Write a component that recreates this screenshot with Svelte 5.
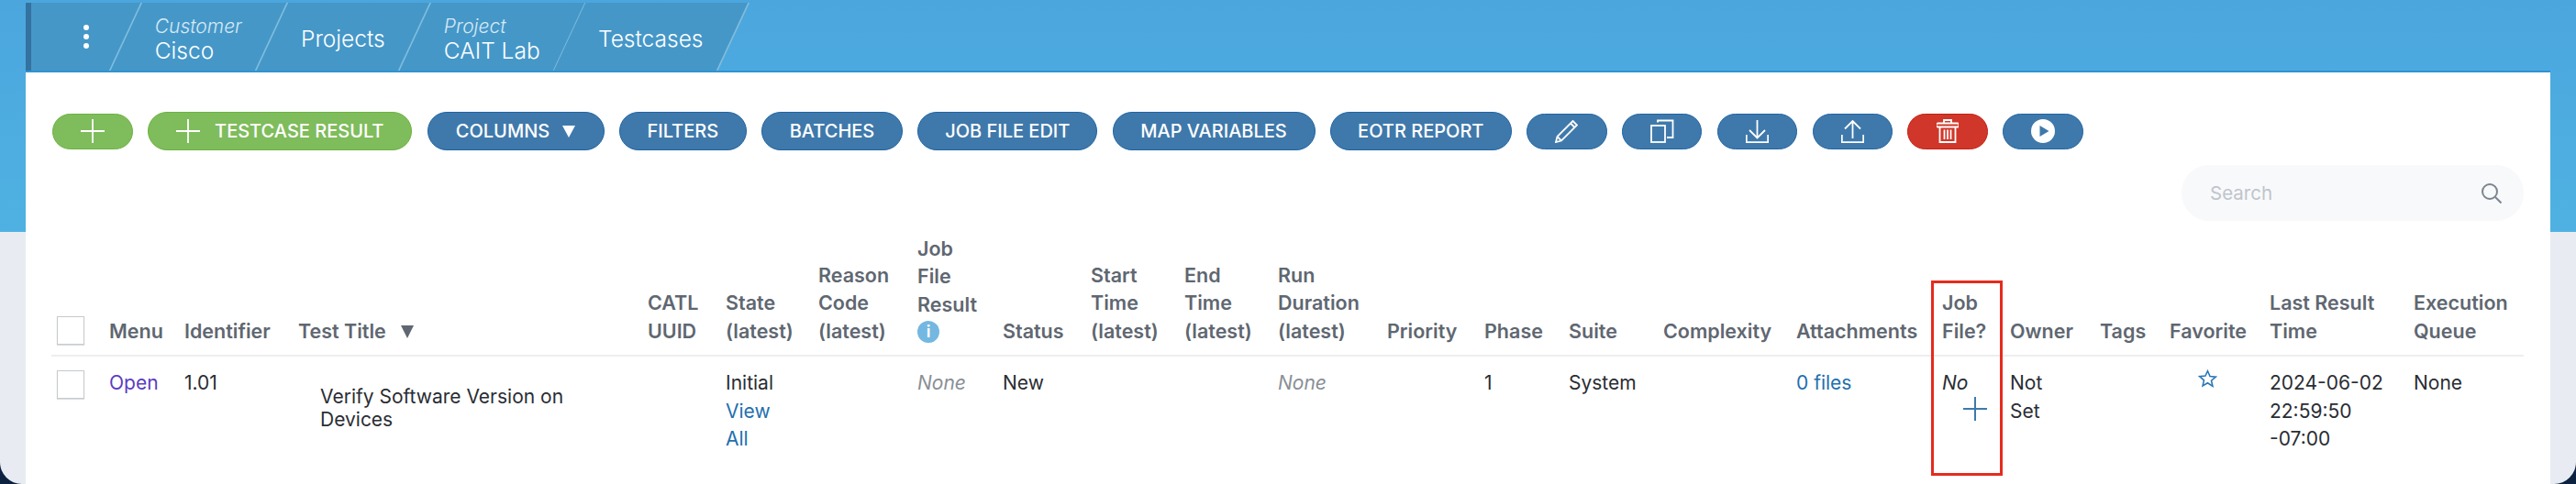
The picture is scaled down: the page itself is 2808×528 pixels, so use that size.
<script>
    const columns = [
        { w: 63, lines: [] },
        { w: 82, lines: ['Menu'] },
        { w: 124, lines: ['Identifier'] },
        { w: 381, lines: ['Test Title'], sort: true },
        { w: 85, lines: ['CATL', 'UUID'] },
        { w: 101, lines: ['State', '(latest)'] },
        { w: 108, lines: ['Reason', 'Code', '(latest)'] },
        { w: 93, lines: ['Job', 'File', 'Result'], info: true },
        { w: 96, lines: ['Status'] },
        { w: 102, lines: ['Start', 'Time', '(latest)'] },
        { w: 102, lines: ['End', 'Time', '(latest)'] },
        { w: 119, lines: ['Run', 'Duration', '(latest)'] },
        { w: 106, lines: ['Priority'] },
        { w: 92, lines: ['Phase'] },
        { w: 103, lines: ['Suite'] },
        { w: 145, lines: ['Complexity'] },
        { w: 159, lines: ['Attachments'] },
        { w: 74, lines: ['Job', 'File?'] },
        { w: 98, lines: ['Owner'] },
        { w: 76, lines: ['Tags'] },
        { w: 109, lines: ['Favorite'] },
        { w: 157, lines: ['Last Result', 'Time'] },
        { w: 120, lines: ['Execution', 'Queue'] }
    ];

    const textButtons = [
        { label: 'COLUMNS', caret: true, w: 193 },
        { label: 'FILTERS', w: 139 },
        { label: 'BATCHES', w: 154 },
        { label: 'JOB FILE EDIT', w: 196 },
        { label: 'MAP VARIABLES', w: 221 },
        { label: 'EOTR REPORT', w: 198 }
    ];
</script>

<div class="app">
    <nav class="crumbs">
        <div class="crumb first"><span class="dots"><i></i><i></i><i></i></span></div>
        <div class="crumb"><div class="label"><em>Customer</em><b>Cisco</b></div></div>
        <div class="crumb"><div class="label"><b>Projects</b></div></div>
        <div class="crumb"><div class="label"><em>Project</em><b>CAIT Lab</b></div></div>
        <div class="crumb"><div class="label"><b>Testcases</b></div></div>
    </nav>

    <main class="panel">
        <div class="toolbar">
            <button class="btn green small-add" aria-label="Add">
                <svg width="26" height="26" viewBox="0 0 26 26"><path d="M13 0v26M0 13h26" /></svg>
            </button>
            <button class="btn green result">
                <svg width="26" height="26" viewBox="0 0 26 26"><path d="M13 0v26M0 13h26" /></svg>
                TESTCASE RESULT
            </button>
            {#each textButtons as b}
                <button class="btn blue" style="width: {b.w}px">
                    {b.label}
                    {#if b.caret}<span class="caret"></span>{/if}
                </button>
            {/each}
            <button class="btn blue icon" aria-label="Edit">
                <svg width="25" height="25" viewBox="0 0 25 25"><path d="M19.500 1l4.500 4.500L7 22.500 1 24l1.500-6zM2.500 18L7 22.500M17 3.500L21.500 8" /></svg>
            </button>
            <button class="btn blue icon" aria-label="Copy">
                <svg width="26" height="26" viewBox="0 0 26 26"><rect x="1" y="7" width="15" height="18" /><path d="M8 3.500V1.500h16.500V20H18" /></svg>
            </button>
            <button class="btn blue icon" aria-label="Download">
                <svg width="25" height="25" viewBox="0 0 25 25"><path d="M12.500 0v19M4 11l8.500 8.500L21 11M.8 16v8.200h23.400V16" /></svg>
            </button>
            <button class="btn blue icon" aria-label="Upload">
                <svg width="25" height="25" viewBox="0 0 25 25"><path d="M12.500 20V1M4 9.500L12.500 1 21 9.500M.8 16v8.200h23.400V16" /></svg>
            </button>
            <button class="btn red icon" aria-label="Delete">
                <svg width="24" height="26" viewBox="0 0 24 26"><path d="M8 4V1h8v3M1.500 4.500h21a1 1 0 0 1 0 4h-21a1 1 0 0 1 0-4zM3.500 8.500V25h17V8.500M8.500 11.500v10.500M12 11.500v10.500M15.500 11.500v10.500" /></svg>
            </button>
            <button class="btn blue icon" aria-label="Run">
                <svg width="26" height="26" viewBox="0 0 26 26"><circle class="fill" cx="13" cy="13" r="13" /><path class="play" d="M9.500 7l10 6-10 6z" /></svg>
            </button>
        </div>

        <div class="search-row">
            <div class="search">
                <span>Search</span>
                <svg width="22" height="22" viewBox="0 0 22 22"><circle cx="9" cy="9" r="8" /><path d="M15 15l6.500 6.500" /></svg>
            </div>
        </div>

        <table>
            <colgroup>
                {#each columns as c}<col style="width: {c.w}px" />{/each}
            </colgroup>
            <thead>
                <tr>
                    {#each columns as c, i}
                        <th>
                            {#if i === 0}
                                <span class="check"></span>
                            {/if}
                            {#each c.lines as line}<div>{line}{#if c.sort}<span class="sort"></span>{/if}</div>{/each}
                            {#if c.info}<span class="info">i</span>{/if}
                        </th>
                    {/each}
                </tr>
            </thead>
            <tbody>
                <tr>
                    <td><span class="check"></span></td>
                    <td class="purple">Open</td>
                    <td>1.01</td>
                    <td class="title">Verify Software Version on Devices</td>
                    <td></td>
                    <td>Initial<br /><span class="link">View<br />All</span></td>
                    <td></td>
                    <td class="none">None</td>
                    <td>New</td>
                    <td></td>
                    <td></td>
                    <td class="none">None</td>
                    <td></td>
                    <td>1</td>
                    <td>System</td>
                    <td></td>
                    <td class="link">0 files</td>
                    <td class="jobfile">
                        <em>No</em>
                        <svg class="plus" width="26" height="26" viewBox="0 0 26 26"><path d="M13 0v26M0 13h26" /></svg>
                    </td>
                    <td>Not<br />Set</td>
                    <td></td>
                    <td class="fav">
                        <svg width="21" height="21" viewBox="0 0 24 24"><path d="M12 2l2.900 6.600 7.100.7-5.400 4.700 1.600 7L12 16.900 5.800 20.500l1.600-7L2 8.800l7.100-.7z" /></svg>
                    </td>
                    <td>2024-06-02<br />22:59:50<br />-07:00</td>
                    <td>None</td>
                </tr>
            </tbody>
        </table>

        <div class="highlight"></div>
    </main>
</div>

<style>
    :global(body) {
        margin: 0;
        background: #0d2140;
    }

    .app {
        position: relative;
        height: 528px;
        box-sizing: border-box;
        overflow: hidden;
        padding: 3px 28px 0;
        border-radius: 0 0 24px 24px;
        background: linear-gradient(#4ba6de 0, #4fb1e2 253px, #e8ecf2 253px);
        font-family: Inter, "Liberation Sans", sans-serif;
    }

    .crumbs {
        display: flex;
        height: 74px;
        overflow: hidden;
        color: #fff;
        border-left: 6px solid #34729f;
    }

    .crumb {
        display: flex;
        align-items: center;
        padding: 0 31px;
        background: #4597c8;
        border-right: 2px solid #7fbcdd;
        transform: skewX(-25deg);
    }

    .crumb.first {
        width: 140px;
        box-sizing: border-box;
        margin-left: -36px;
        padding: 0;
        justify-content: center;
    }

    .label,
    .dots {
        transform: skewX(25deg);
    }

    .label {
        display: flex;
        flex-direction: column;
        padding-top: 4px;
    }

    .label em {
        font-size: 21px;
        font-weight: 300;
        line-height: 25px;
        color: #d5e9f5;
    }

    .label b {
        font-size: 24.500px;
        font-weight: 300;
        line-height: 28px;
    }

    .dots {
        display: flex;
        flex-direction: column;
        gap: 4px;
        margin-left: 54px;
    }

    .dots i {
        width: 6px;
        height: 6px;
        border-radius: 50%;
        background: #fff;
    }

    .panel {
        position: relative;
        height: 451px;
        background: #fff;
        border-top: 2px solid #2e94d2;
        box-sizing: border-box;
    }

    .toolbar {
        display: flex;
        align-items: center;
        gap: 16.250px;
        padding: 43px 0 0 29px;
    }

    .btn {
        display: flex;
        align-items: center;
        justify-content: center;
        flex: none;
        height: 42px;
        padding: 0;
        border-radius: 21px;
        border: 1px solid #1f64a4;
        color: #fff;
        font-family: inherit;
        font-size: 20px;
        font-weight: 500;
    }

    .btn svg {
        fill: none;
        stroke: #fff;
        stroke-width: 1.800;
    }

    .btn svg .fill {
        fill: #fff;
        stroke: none;
    }

    .btn svg .play {
        fill: #3f79ab;
        stroke: none;
    }

    .green {
        background: #7fbc5c;
        border-color: #6db33f;
    }

    .blue {
        background: #3f79ab;
    }

    .red {
        background: #d0372a;
        border-color: #c42015;
    }

    .small-add {
        width: 88px;
        height: 39px;
    }

    .result {
        width: 288px;
        gap: 16px;
    }

    .icon {
        width: 87.600px;
        height: 39px;
    }

    .caret {
        width: 0;
        height: 0;
        margin-left: 14px;
        border: 7px solid transparent;
        border-top: 13px solid #fff;
        border-bottom: 0;
    }

    .search-row {
        display: flex;
        justify-content: flex-end;
        padding: 16px 29px 0 0;
    }

    .search {
        display: flex;
        align-items: center;
        justify-content: space-between;
        width: 373px;
        height: 61px;
        box-sizing: border-box;
        padding: 0 24px 0 31px;
        border-radius: 30px;
        background: #f8f9fb;
        color: #c0c4cb;
        font-size: 20.500px;
    }

    .search svg {
        fill: none;
        stroke: #7d858f;
        stroke-width: 2;
    }

    table {
        width: 2695px;
        margin: 14.500px 0 0 28px;
        border-collapse: collapse;
        table-layout: fixed;
        font-size: 21px;
        line-height: 30.500px;
        color: #2a2d33;
    }

    th {
        padding: 0 0 11px;
        text-align: left;
        vertical-align: bottom;
        font-size: 21.500px;
        font-weight: 600;
        color: #5f6771;
        border-bottom: 2px solid #eceef0;
        white-space: nowrap;
    }

    td {
        padding: 14px 0 0;
        vertical-align: top;
    }

    .check {
        display: block;
        width: 28px;
        height: 29px;
        margin-left: 6px;
        border: 1px solid #c6cace;
        box-shadow: 0 1px 1px #dcdfe2;
    }

    td:first-child .check {
        margin-top: 1px;
    }

    .sort {
        display: inline-block;
        width: 0;
        height: 0;
        margin-left: 16px;
        border: 7.500px solid transparent;
        border-top: 14px solid #5f6771;
        border-bottom: 0;
    }

    .info {
        display: block;
        width: 24px;
        height: 24px;
        margin: 3px 0 2px;
        border-radius: 50%;
        background: #74b8e2;
        color: #fff;
        font-size: 18px;
        line-height: 24px;
        text-align: center;
    }

    .purple {
        color: #5b3cc4;
    }

    .link {
        color: #1f6fae;
    }

    .none {
        color: #8a8f96;
        font-style: italic;
    }

    td.title {
        padding: 31px 40px 0 24px;
        line-height: 25px;
    }

    .jobfile em {
        display: block;
    }

    .plus {
        display: block;
        margin: -1px 0 0 23px;
        fill: none;
        stroke: #3f79ab;
        stroke-width: 2;
    }

    .fav svg {
        display: block;
        margin: 0 0 0 31px;
        fill: none;
        stroke: #2a76b5;
        stroke-width: 1.800;
    }

    .highlight {
        position: absolute;
        left: 2077px;
        top: 227px;
        width: 78px;
        height: 213px;
        box-sizing: border-box;
        border: 3px solid #e52b1e;
    }
</style>
